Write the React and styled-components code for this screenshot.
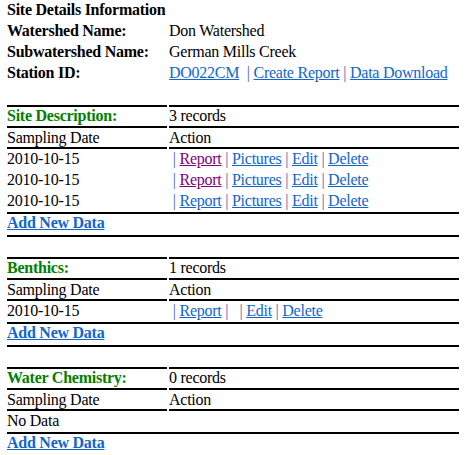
import React from "react";
import styled, { createGlobalStyle } from "styled-components";

const Global = createGlobalStyle`
  html, body { margin: 0; padding: 0; background: #fff; }
  body {
    font-family: "Liberation Serif", "Times New Roman", serif;
    font-size: 16px;
    color: #000;
    letter-spacing: -0.25px;
  }
`;

const Page = styled.div`
  width: 452px;
  padding-left: 7px;
`;

const InfoGrid = styled.div`
  display: grid;
  grid-template-columns: 160px 290px;
  column-gap: 2px;
  grid-auto-rows: 21px;
  line-height: 19px;
  margin-bottom: 21px;
`;

const Title = styled.div`
  grid-column: 1 / -1;
  font-weight: bold;
`;

const Label = styled.div`
  font-weight: bold;
  white-space: nowrap;
`;

const Value = styled.div`
  white-space: nowrap;
`;

const Section = styled.div`
  display: grid;
  grid-template-columns: 160px 290px;
  column-gap: 2px;
  margin-bottom: 20px;
`;

const HeadCell = styled.div`
  box-sizing: border-box;
  height: 21px;
  border-top: 2px solid #000;
  line-height: 18px;
  white-space: nowrap;
  color: ${(p) => (p.$green ? "#008000" : "#000")};
  font-weight: ${(p) => (p.$green ? "bold" : "normal")};
`;

const ColHead = styled.div`
  box-sizing: border-box;
  height: 23px;
  border-top: 2px solid #000;
  border-bottom: 2px solid #000;
  line-height: 19px;
  white-space: nowrap;
`;

const DataCell = styled.div`
  height: 21px;
  line-height: 20px;
  white-space: nowrap;
`;

const AddRow = styled.div`
  grid-column: 1 / -1;
  box-sizing: border-box;
  height: 25px;
  border-top: 2px solid #000;
  border-bottom: 2px solid #000;
  line-height: 18px;
`;

const Link = styled.a`
  color: ${(p) => (p.$visited ? "#800080" : "#1166cc")};
  text-decoration: underline;
  font-weight: ${(p) => (p.$bold ? "bold" : "normal")};
  cursor: pointer;
`;

const Sep = styled.span`
  color: #5560b0;
`;

const ActionLinks = ({ items }) => (
  <>
    {"\u00a0"}
    {items.map((it, i) => (
      <React.Fragment key={i}>
        <Sep>|</Sep>{" "}
        {it ? <Link $visited={it.visited}>{it.label}</Link> : "\u00a0"}
        {i < items.length - 1 ? " " : ""}
      </React.Fragment>
    ))}
  </>
);

const full = (visited) => [
  { label: "Report", visited },
  { label: "Pictures" },
  { label: "Edit" },
  { label: "Delete" },
];

const sections = [
  {
    name: "Site Description:",
    count: "3 records",
    rows: [
      { date: "2010-10-15", items: full(true) },
      { date: "2010-10-15", items: full(true) },
      { date: "2010-10-15", items: full(false) },
    ],
  },
  {
    name: "Benthics:",
    count: "1 records",
    rows: [
      {
        date: "2010-10-15",
        items: [{ label: "Report" }, null, { label: "Edit" }, { label: "Delete" }],
      },
    ],
  },
  {
    name: "Water Chemistry:",
    count: "0 records",
    rows: [{ date: "No Data", items: null }],
  },
];

export default function App() {
  return (
    <>
      <Global />
      <Page>
        <InfoGrid>
          <Title>Site Details Information</Title>
          <Label>Watershed Name:</Label>
          <Value>Don Watershed</Value>
          <Label>Subwatershed Name:</Label>
          <Value>German Mills Creek</Value>
          <Label>Station ID:</Label>
          <Value>
            <Link>DO022CM</Link>
            {"\u00a0 "}
            <Sep>|</Sep> <Link>Create Report</Link> <Sep>|</Sep>{" "}
            <Link>Data Download</Link>
          </Value>
        </InfoGrid>
        {sections.map((s) => (
          <Section key={s.name}>
            <HeadCell $green>{s.name}</HeadCell>
            <HeadCell>{s.count}</HeadCell>
            <ColHead>Sampling Date</ColHead>
            <ColHead>Action</ColHead>
            {s.rows.map((r, i) => (
              <React.Fragment key={i}>
                <DataCell>{r.date}</DataCell>
                <DataCell>{r.items ? <ActionLinks items={r.items} /> : null}</DataCell>
              </React.Fragment>
            ))}
            <AddRow>
              <Link $bold>Add New Data</Link>
            </AddRow>
          </Section>
        ))}
      </Page>
    </>
  );
}
